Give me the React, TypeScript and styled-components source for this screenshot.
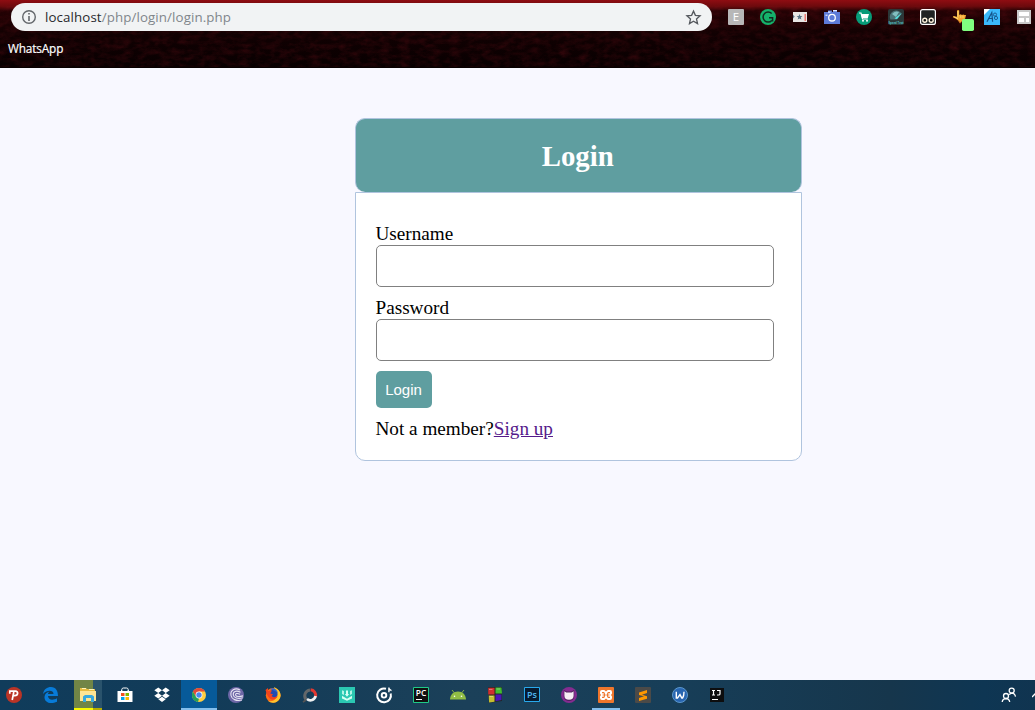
import React from "react";
import styled, { createGlobalStyle } from "styled-components";

const GlobalStyle = createGlobalStyle`
  * { box-sizing: border-box; }
  body { margin: 0; background: #f8f8ff; overflow: hidden; }
`;

const Screen = styled.div`
  display: flex;
  flex-direction: column;
  width: 1035px;
  height: 710px;
  overflow: hidden;
  font-family: "Liberation Serif", "Times New Roman", serif;
`;

const BrowserBar = styled.header`
  position: relative;
  flex: 0 0 68px;
  display: flex;
  flex-direction: column;
  background: #150002;
  font-family: "Open Sans", sans-serif;
`;

const Texture = styled.svg`
  position: absolute;
  inset: 0;
  width: 100%;
  height: 100%;
`;

const AddressRow = styled.div`
  position: relative;
  display: flex;
  align-items: center;
  height: 28px;
  margin: 3px 0 0 11px;
`;

const AddressField = styled.div`
  display: flex;
  align-items: center;
  width: 701px;
  height: 28px;
  padding: 0 11px 0 10px;
  border-radius: 14px;
  background: #f1f3f4;
`;

const Url = styled.span`
  flex: 1;
  margin-left: 8px;
  font-size: 13.3px;
  letter-spacing: 0.11px;
  line-height: 18px;
  color: #80868b;
  white-space: nowrap;
`;

const Host = styled.span`
  color: #27292c;
`;

const Extensions = styled.div`
  display: flex;
  gap: 16px;
  margin-left: 16px;
`;

const Bookmark = styled.span`
  position: relative;
  margin: 9px 0 0 8px;
  font-size: 11.8px;
  letter-spacing: -0.15px;
  line-height: 16px;
  color: #fff;
  -webkit-text-stroke: 0.2px #fff;
`;

const Page = styled.main`
  flex: 1;
  background: #f8f8ff;
  padding: 50px 0 0 355px;
`;

const CardHeader = styled.div`
  display: flex;
  align-items: center;
  justify-content: center;
  width: 447px;
  height: 74px;
  padding-right: 1.5px;
  border: 1px solid #b0c4de;
  border-bottom: none;
  border-radius: 10px;
  background: #5f9ea0;
`;

const Title = styled.h2`
  margin: 0;
  font-size: 28.8px;
  line-height: 32px;
  color: #fff;
`;

const LoginForm = styled.form`
  width: 447px;
  height: 269px;
  padding: 30px 20px 0;
  border: 1px solid #b0c4de;
  border-radius: 0 0 10px 10px;
  background: #fff;
  font-size: 19.2px;
`;

const Field = styled.label`
  display: flex;
  flex-direction: column;
  margin-bottom: 10px;
  line-height: 22px;
`;

const FieldName = styled.span`
  margin-left: -0.5px;
`;

const Input = styled.input`
  width: 398px;
  height: 42px;
  padding: 5px 10px;
  border: 1px solid #808080;
  border-radius: 5px;
  background: #fff;
  font-size: 16px;
  outline: none;
`;

const SubmitButton = styled.button`
  display: block;
  width: 56px;
  height: 37px;
  padding: 0 1px 0 0;
  border: none;
  border-radius: 5px;
  background: #5f9ea0;
  color: #fff;
  font: 15px "Liberation Sans", Arial, sans-serif;
`;

const Signup = styled.p`
  margin: 10px 0 0 -0.5px;
  line-height: 22px;
`;

const SignupLink = styled.a`
  color: #551a8b;
  text-decoration: underline;
`;

const Taskbar = styled.footer`
  flex: 0 0 30px;
  display: flex;
  padding-right: 1px;
  background: linear-gradient(90deg, #103c5b 0%, #123b58 20%, #1b4059 45%, #173e58 65%, #16364c 86%, #0e3653 95%, #103450 100%);
`;

const Apps = styled.div`
  display: grid;
  grid-template-columns: repeat(20, 37px);
  margin-left: -4px;
`;

type TileState = "idle" | "attention" | "active" | "running";

const tileBackground: Record<TileState, string> = {
  idle: "none",
  attention:
    "linear-gradient(90deg, #f9f900 19px, #b5ac00 19px) 0 100% / 28px 2px no-repeat, linear-gradient(90deg, #718546 19px, #2a536c 19px) 0 0 / 28px 30px no-repeat",
  active:
    "linear-gradient(#83beec, #83beec) 0 100% / 36px 2px no-repeat, linear-gradient(#075a99, #075a99) 0 0 / 36px 30px no-repeat",
  running: "linear-gradient(#83beec, #83beec) 0 100% / 28px 2px no-repeat",
};

const tileOffset: Record<TileState, string> = {
  idle: "0",
  attention: "4px",
  active: "0",
  running: "4px",
};

const Tile = styled.div<{ $state: TileState }>`
  display: flex;
  align-items: center;
  justify-content: center;
  height: 30px;
  padding-right: 1px;
  background: ${(p) => tileBackground[p.$state]};
  background-position-x: ${(p) => tileOffset[p.$state]};
`;

const Tray = styled.div`
  display: flex;
  align-items: center;
  margin-left: auto;
`;

const Caret = styled.svg`
  margin: 0 -6px 0 15px;
`;

const Glyph = styled.svg`
  display: block;
  flex: none;
  overflow: visible;
`;

const PixelLabel = styled.text`
  font-family: "Open Sans", sans-serif;
  text-anchor: middle;
`;

function Icon({ children, size = 16 }: { children: React.ReactNode; size?: number }) {
  return (
    <Glyph width={size} height={size} viewBox="0 0 16 16" fill="none">
      {children}
    </Glyph>
  );
}

const extensionIcons: React.ReactNode[] = [
  <>
    <rect width="16" height="16" rx="1" fill="#b7b7b7" />
    <PixelLabel x="8" y="12" fontSize="11.5" fill="#fff">E</PixelLabel>
  </>,
  <>
    <circle cx="8" cy="8" r="8" fill="#15b26b" />
    <path d="M11.7 4.6A5 5 0 1 0 11.8 11.4M9 8.7h3.6v3.8" stroke="#102d20" strokeWidth="1.5" />
  </>,
  <>
    <rect x="1" y="3" width="14" height="10" fill="#e8e6e4" />
    <path d="M7.5 5l.8 2 2.1.1-1.6 1.3.6 2.1-1.9-1.1-1.8 1.1.6-2.1-1.7-1.3 2.1-.1zM1 5.8l1.7 1.6L1 9.6z" fill="#587386" />
    <path d="M13.2 5v7" stroke="#ed6057" strokeWidth="1.2" />
  </>,
  <>
    <path d="M0 3h4V1.5h4V3h1V2h4v1h3v12H0z" fill="#5d7bd8" />
    <path d="M4 3.2h2.5M9 1.7h4" stroke="#e8edff" strokeWidth="1.2" />
    <circle cx="8" cy="8.7" r="3.3" stroke="#fff" strokeWidth="1.3" />
    <path d="M1.5 6.2h2" stroke="#fff" />
  </>,
  <>
    <circle cx="8" cy="8" r="8" fill="#079b78" />
    <path d="M3 4h2l1.5 6h5.3" stroke="#fff" strokeWidth="1.2" />
    <path d="M5 5h8l-1.2 4H6z" fill="#fff" />
    <circle cx="7" cy="11.8" r="1" fill="#fff" />
    <circle cx="11" cy="11.8" r="1" fill="#fff" />
  </>,
  <>
    <rect width="16" height="16" rx="2" fill="#2b3738" />
    <path d="M2.4 10.5A6 6 0 0 1 13.6 5L9 10.5z" fill="#4c7478" />
    <path d="M4 5a6 6 0 0 1 7-2L8 8z" fill="#82bfc0" />
    <path d="M6.5 9.5L14 3.7 9 10z" fill="#55e6e3" />
    <PixelLabel x="8" y="15" fontSize="3.5" fontWeight="700" fill="#54bfc2" textLength="15" lengthAdjust="spacingAndGlyphs">Speed Test</PixelLabel>
  </>,
  <>
    <rect x=".6" y=".6" width="14.8" height="14.8" rx="2" fill="#202323" stroke="#fff" strokeWidth="1.2" />
    <circle cx="4.8" cy="11.2" r="2" fill="#111" stroke="#fff4df" strokeWidth="1.4" />
    <circle cx="11.2" cy="11.2" r="2" fill="#111" stroke="#fff4df" strokeWidth="1.4" />
  </>,
  <>
    <path d="M5 1.5Q6.2.3 7.2 1.5V6l1.3-.8L10 6l1.2-.6 1.3.7 1.5 0-.8 3.4L10.5 12 8 14.5 6.5 12 4 9.7.8 8.2 1.2 7 5 7.7z" fill="#f3a832" />
    <path d="M6 2v6.5M2 7.8l4 2M8.8 6.4v2.5M11 6.6v2.2" stroke="#ffdf84" strokeWidth=".8" />
    <path d="M6.5 11.5L8 14l2-2" stroke="#b95a18" strokeWidth=".8" />
    <rect x="10" y="10" width="12" height="12" rx="1.7" fill="#80ff80" />
  </>,
  <>
    <rect width="16" height="16" fill="#3bb9fb" />
    <path d="M0 0h6L0 6z" fill="#fff" />
    <path d="M3 12.8L7.8 3.5 8.6 12.8M5 9.5h4" stroke="#155289" strokeWidth="1.2" />
    <circle cx="11" cy="5.6" r="1.6" stroke="#155289" strokeWidth=".9" />
    <circle cx="12" cy="9" r="1.6" stroke="#155289" strokeWidth=".9" />
  </>,
  <>
    <rect x="1" y="1" width="14" height="14" fill="#c9c9c9" />
    <path d="M3 3h10v4H3zM3 9h5v4H3zM10 9h3v4h-3z" fill="#fff" />
  </>,
];

const apps: { name: string; state?: TileState; art: React.ReactNode }[] = [
  {
    name: "psiphon",
    art: (
      <>
        <circle cx="8" cy="8" r="8" fill="#ba3426" />
        <path d="M6.2 13L7.8 5M3.8 6.8V4.2h5.7c3 0 2.8 4.4-.6 4.4H7.5" stroke="#fff" strokeWidth="1.7" />
      </>
    ),
  },
  {
    name: "edge",
    art: (
      <path d="M0 7C1 2 4 0 8 0c5 0 7 4 7 9H5c.1 4 5 4.7 9 2.2v3.5C7 18 1 15 1.5 9.7 1.8 7 4 5.2 6.5 4.5 5.3 5.4 5 6.5 5 7.1h5.5C10.5 2.8 3.8 2.8 0 7z" fill="#087bd8" />
    ),
  },
  {
    name: "explorer",
    state: "attention",
    art: (
      <>
        <path d="M0 1h6l1 1h8v12H0z" fill="#e8bc42" />
        <path d="M0 4h16v10H0z" fill="#ffe594" />
        <path d="M2 1.5h4M9 2.5h5" stroke="#fff4b8" />
        <path d="M3 15V9.5L5 8h7l2 1.5V15h-3v-4H6v4z" fill="#38a9df" />
      </>
    ),
  },
  {
    name: "store",
    art: (
      <>
        <path d="M4.8 4V2.4Q5 1 6.4 1h3.2Q11 1 11.2 2.4V4M3.8 5l1-2M12 5l-1-2" stroke="#fff" />
        <path d="M.5 4h15v11h-15z" fill="#fff" />
        <path d="M4 6h3.5v3H4z" fill="#f25022" />
        <path d="M8.5 6H12v3H8.5z" fill="#7fba00" />
        <path d="M4 10h3.5v3H4z" fill="#00a4ef" />
        <path d="M8.5 10H12v3H8.5z" fill="#ffb900" />
      </>
    ),
  },
  {
    name: "dropbox",
    art: (
      <path d="M4.3.6L8 3.3 4.3 6 .3 3.3zM11.7.6l4 2.7-4 2.7L8 3.3zM.3 8.7L4.3 6 8 8.7l-3.7 2.7zM8 8.7L11.7 6l4 2.7-4 2.7zM4.3 12.3L8 9.7l3.7 2.6L8 15z" fill="#fff" />
    ),
  },
  {
    name: "chrome",
    state: "active",
    art: (
      <>
        <circle cx="8" cy="8" r="7" fill="#ffcd40" />
        <path d="M1.9 4.6A7 7 0 0 1 14.1 4.6H8L5 9.7z" fill="#e04a3b" />
        <path d="M1.9 4.6L5 9.7l3 1.8L7 15A7 7 0 0 1 1.9 4.6z" fill="#25a05a" />
        <circle cx="8" cy="8" r="3.4" fill="#fff" />
        <circle cx="8" cy="8" r="2.7" fill="#4a87ed" />
      </>
    ),
  },
  {
    name: "bittorrent",
    art: (
      <>
        <circle cx="8" cy="8" r="8" fill="#6e67a7" />
        <path d="M12 3C7 .2 2 3.5 3 8.5c.7 3.5 5 6 11 4.5M12.5 5.2C8 3 4.8 4.6 5.3 8c.5 3 4.5 4.2 9.5 2.8M12 7.2C8.8 5.8 7.2 6.5 7.6 8.1c.5 1.5 3.5 1.8 7.4.8" stroke="#e8e5f3" strokeWidth="1.1" />
      </>
    ),
  },
  {
    name: "firefox",
    art: (
      <>
        <circle cx="8.2" cy="8.3" r="7.4" fill="#ff6b14" />
        <path d="M9 0c5 2 8 7 6 11-2 5-8 6-12 3 6 1 9-2 8-7z" fill="#ffc42b" />
        <circle cx="8.3" cy="7" r="4.3" fill="#224ab0" />
        <path d="M.5 3L3 1v3l4-.5-1.8 3L8 7.3 6.6 9c2 2 4 1.5 6-.2-.8 4-5.6 5-8.2 2.2C2 9 1.7 6 .5 3z" fill="#f2431d" />
        <path d="M5 2c3-2 7 0 8 4L10 4z" fill="#2765d2" />
      </>
    ),
  },
  {
    name: "recorder",
    art: (
      <>
        <path d="M4 12.5a6 6 0 0 1 4-9.6" stroke="#646769" strokeWidth="3" />
        <path d="M8.6 2.8a5.6 5.6 0 0 1 5 6.8" stroke="#e23831" strokeWidth="3" />
        <path d="M13.6 9a5.3 5.3 0 0 1-8.6 3" stroke="#f0f1f1" strokeWidth="2.7" />
        <path d="M1 15l3-2" stroke="#555" strokeWidth="1.7" />
      </>
    ),
  },
  {
    name: "filmora",
    art: (
      <>
        <path d="M0 0h16v16H0z" fill="#2bc8b2" />
        <path d="M3.2 3.2l1.6.7v4L3.2 7zM12.8 3.2l-1.6.7v4l1.6-.9zM7 3.5h2V7h1.2L8 9.7 5.8 7H7z" fill="#d4fff3" />
        <path d="M3 8.8l5 3 5-3v2.7l-5 2.2-5-2.2z" fill="#d4fff3" />
      </>
    ),
  },
  {
    name: "groove",
    art: (
      <>
        <path d="M10 1.8A6.9 6.9 0 1 0 14.7 6.6" stroke="#fff" strokeWidth="2" />
        <circle cx="8" cy="8.3" r="2.3" stroke="#fff" strokeWidth="1.9" />
        <path d="M12.9 5.2V.6M12.9 1.2q.3 1.7 2.6 2.4" stroke="#fff" strokeWidth="1.4" />
      </>
    ),
  },
  {
    name: "pycharm",
    art: (
      <>
        <path d="M.5.5h15v15H.5z" fill="#101010" stroke="#20c988" />
        <PixelLabel x="8" y="9.4" fontSize="9" fontWeight="600" fill="#fff" textLength="10.5" lengthAdjust="spacingAndGlyphs">PC</PixelLabel>
        <path d="M3 12.5h6" stroke="#fff" />
      </>
    ),
  },
  {
    name: "android",
    art: (
      <>
        <path d="M0 12.5C.3 7.4 3.6 4.5 8 4.5s7.7 2.9 8 8z" fill="#91bd45" />
        <path d="M2 3l2.5 3M14 3l-2.5 3" stroke="#91bd45" strokeWidth=".9" />
        <circle cx="4.5" cy="9.2" r=".8" fill="#fff" />
        <circle cx="11.5" cy="9.2" r=".8" fill="#fff" />
      </>
    ),
  },
  {
    name: "blocks",
    art: (
      <>
        <path d="M1 .3l14-.3v14L2 15.8z" fill="#252525" />
        <path d="M1.2.8h6.3v6.7H1.2z" fill="#cf2f2f" />
        <path d="M8.5.6h6L15 6.6H8.5z" fill="#42bd30" />
        <path d="M1.7 8.5h5.8v6.3l-5.4.8z" fill="#c6be30" />
        <path d="M8.5 7.6h6v5.5l-6 1.2z" fill="#4b14b8" />
        <path d="M2 2.5h3.5M9.5 2h3.5M2.5 9.5h3.5" stroke="#fff" strokeOpacity=".35" />
      </>
    ),
  },
  {
    name: "photoshop",
    art: (
      <>
        <path d="M.5.5h15v14H.5z" fill="#071b30" stroke="#29a9ec" />
        <PixelLabel x="8" y="11" fontSize="9" fontWeight="600" fill="#4fb8f0">Ps</PixelLabel>
      </>
    ),
  },
  {
    name: "github",
    art: (
      <>
        <circle cx="8" cy="8" r="8" fill="#852c91" />
        <path d="M2.8 3l3 1.5h4.4L13.2 3v7q-1 4-5.2 4t-5.2-4z" fill="#51205e" />
        <path d="M3.4 4.2L5.2 5.4h5.6l1.8-1.2v4.6q0 4-4.6 4t-4.6-4z" fill="#f7edf5" />
      </>
    ),
  },
  {
    name: "xampp",
    state: "running",
    art: (
      <>
        <rect width="16" height="16" rx="1" fill="#ef762c" />
        <path d="M4 3h2.3L8 4.6 9.7 3H12q2 0 2 2v1.5L13 8l1 1.5V11q0 2-2 2H9.7L8 11.4 6.3 13H4q-2 0-2-2V9.5L3 8 2 6.5V5q0-2 2-2z" fill="#fff" />
        <path d="M4 5.6h1.8L7 8l-1.2 2.4H4M12 5.6h-1.8L9 8l1.2 2.4H12M4.6 8H7M9 8h2.4" stroke="#ef762c" strokeWidth="1.1" />
      </>
    ),
  },
  {
    name: "sublime",
    art: (
      <>
        <rect width="16" height="16" rx="1" fill="#4b4a48" />
        <path d="M4 5.4L12 3v3L7 7.7l5 1.6v2.5L4 14v-3l5-1.7L4 8z" fill="#ff9800" />
      </>
    ),
  },
  {
    name: "writer",
    art: (
      <>
        <circle cx="8" cy="8" r="7.5" fill="#2866b1" stroke="#5c97cc" />
        <path d="M4.3 4.8v6.2h1.2L8 7.6l1.8 3.4h.8q1.4-1.8 1.4-6.2" stroke="#fff" strokeWidth="1.4" />
      </>
    ),
  },
  {
    name: "intellij",
    art: (
      <>
        <path d="M1 1h14v14H1z" fill="#0d0d0e" />
        <path d="M3 3.5h3M4.5 3.5V8M3 8h3M8 3.5h3V7q0 1-1.5 1H8M3 12.5h6" stroke="#fff" strokeWidth="1.2" />
      </>
    ),
  },
];

export default function App() {
  return (
    <Screen>
      <GlobalStyle />
      <BrowserBar>
        <Texture viewBox="0 0 1035 68" preserveAspectRatio="none">
          <defs>
            <linearGradient id="glow" x1="0" x2="0" y1="0" y2="1">
              <stop offset="0" stopColor="#8f0d12" />
              <stop offset=".09" stopColor="#6e0a0d" />
              <stop offset=".16" stopColor="#240204" />
              <stop offset=".5" stopColor="#110102" />
              <stop offset="1" stopColor="#080001" />
            </linearGradient>
            <filter id="grain" x="0" y="0" width="100%" height="100%">
              <feTurbulence type="fractalNoise" baseFrequency=".1 .18" numOctaves="5" seed="11" />
              <feColorMatrix values="0 0 0 0 .36  0 0 0 0 .01  0 0 0 0 .02  .9 .5 0 0 -.54" />
            </filter>
          </defs>
          <rect width="1035" height="68" fill="url(#glow)" />
          <rect y="6" width="1035" height="62" filter="url(#grain)" opacity=".35" />
          <path d="M0 67.5h1035" stroke="#080000" />
        </Texture>
        <AddressRow>
          <AddressField>
            <Icon>
              <circle cx="8" cy="8" r="6.3" stroke="#63676b" strokeWidth="1.4" />
              <path d="M8 4v1.6M8 7v5" stroke="#63676b" strokeWidth="1.6" />
            </Icon>
            <Url>
              <Host>localhost</Host>/php/login/login.php
            </Url>
            <Icon size={15}>
              <path d="M8 1.2l2 4.5 5 .5-3.8 3.3 1.1 5L8 11.9l-4.3 2.6 1.1-5L1 6.2l5-.5z" stroke="#55595e" strokeWidth="1.4" />
            </Icon>
          </AddressField>
          <Extensions>
            {extensionIcons.map((art, i) => (
              <Icon key={i}>{art}</Icon>
            ))}
          </Extensions>
        </AddressRow>
        <Bookmark>WhatsApp</Bookmark>
      </BrowserBar>
      <Page>
        <CardHeader>
          <Title>Login</Title>
        </CardHeader>
        <LoginForm onSubmit={(e) => e.preventDefault()}>
          <Field>
            <FieldName>Username</FieldName>
            <Input type="text" name="username" />
          </Field>
          <Field>
            <FieldName>Password</FieldName>
            <Input type="password" name="password" />
          </Field>
          <SubmitButton type="submit">Login</SubmitButton>
          <Signup>
            Not a member?<SignupLink href="#">Sign up</SignupLink>
          </Signup>
        </LoginForm>
      </Page>
      <Taskbar>
        <Apps>
          {apps.map((app) => (
            <Tile key={app.name} $state={app.state ?? "idle"}>
              <Icon>{app.art}</Icon>
            </Tile>
          ))}
        </Apps>
        <Tray>
          <Icon>
            <circle cx="10.7" cy="3.6" r="2.5" stroke="#fff" strokeWidth="1.3" />
            <circle cx="5" cy="9" r="2.5" stroke="#fff" strokeWidth="1.3" />
            <path d="M1.2 15q.3-3.2 3.8-3.5 3.3.2 3.7 3.5M8 7.5l2.5-1.4q3.5.1 4 3.6" stroke="#fff" strokeWidth="1.3" />
          </Icon>
          <Caret width="8" height="8" viewBox="0 0 8 8">
            <path d="M0 6l4-4 4 4" fill="none" stroke="#fff" strokeWidth="1.3" />
          </Caret>
        </Tray>
      </Taskbar>
    </Screen>
  );
}
